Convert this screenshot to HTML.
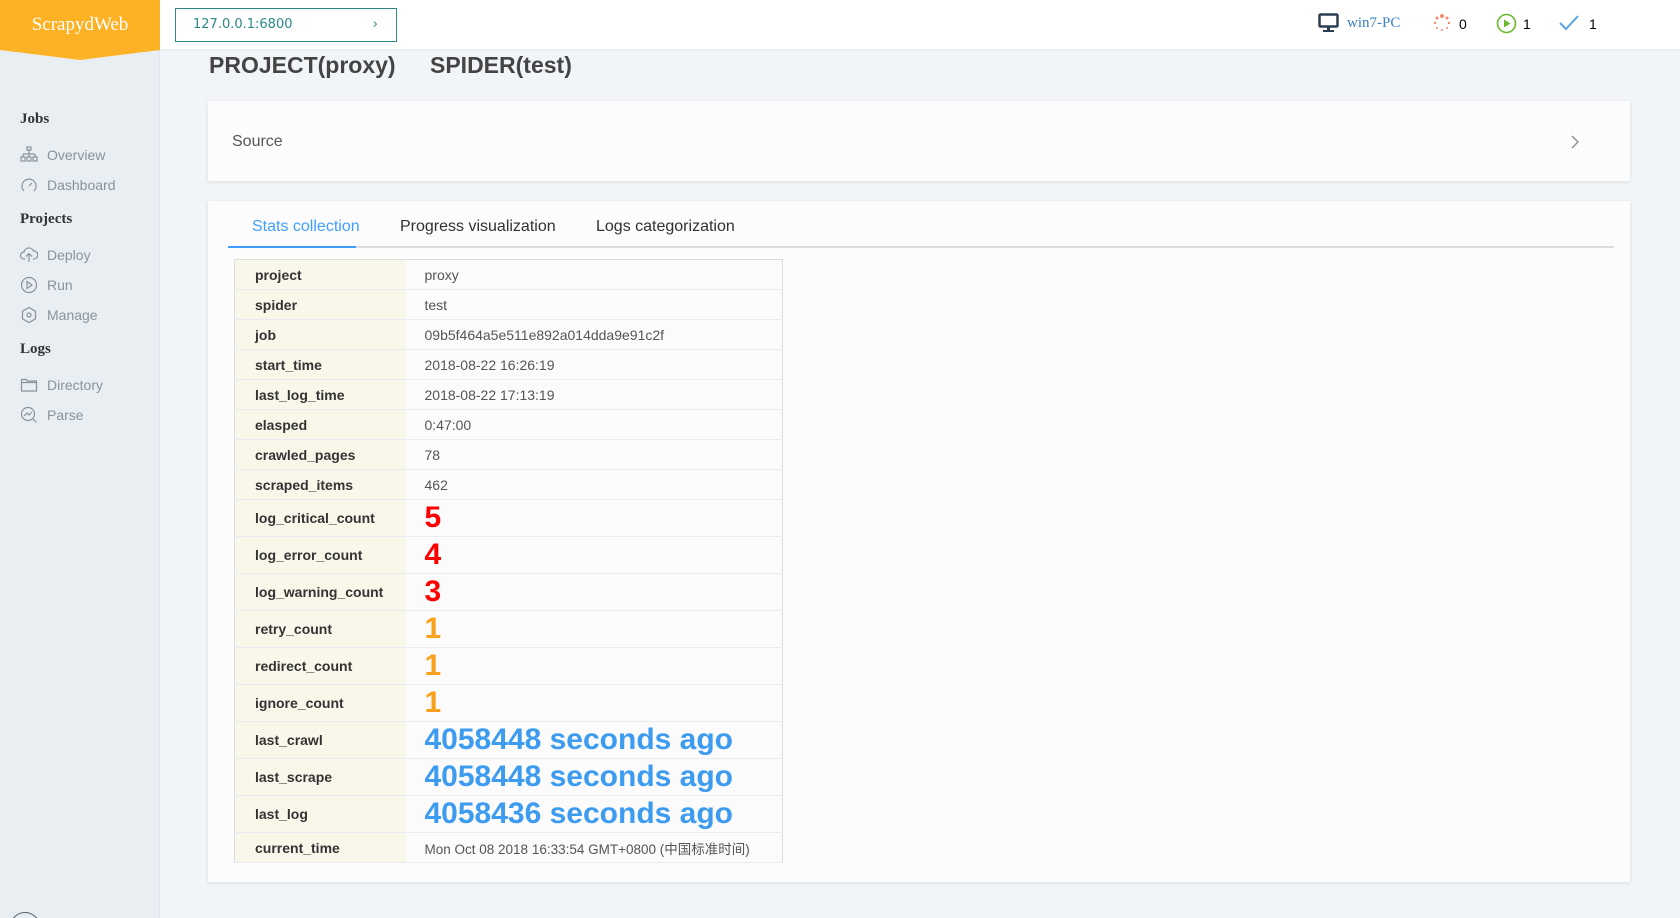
<!DOCTYPE html>
<html style="overflow:hidden;width:1680px;height:918px"><head><meta charset="utf-8"><style>
*{margin:0;padding:0;box-sizing:border-box}
body{width:1680px;height:918px;overflow:hidden;background:#f2f5f8;font-family:"Liberation Sans","Noto Sans CJK SC",sans-serif;position:relative}
.abs{position:absolute}
#side{left:0;top:0;width:160px;height:918px;background:#e9eef3;border-right:1px solid #dfe5ea}
#top{left:0;top:0;width:1680px;height:49px;background:#fff;box-shadow:0 1px 3px rgba(0,0,0,.06)}
#logo{left:0;top:0;width:160px;height:60px;background:#fdb226;clip-path:polygon(0 0,100% 0,100% 50px,50% 60px,0 50px);color:#fff;font-family:"Liberation Serif",serif;font-size:19px;text-align:center;line-height:50px}
.sec{font-family:"Liberation Serif",serif;font-weight:bold;font-size:15px;color:#333;left:20px}
.it{left:20px;font-size:14px;color:#8a939b;display:flex;align-items:center;gap:9px;height:20px}
.it svg{width:18px;height:18px}
.card{background:#fcfcfc;box-shadow:0 1px 4px rgba(0,0,0,.1)}
table{border-collapse:collapse;border:1px solid #dcdcdc;width:549px;font-size:14px}
td{border-bottom:1px solid #e6ecf2;height:30px;padding:0}
td.k{width:171px;background:#f9f7ea;font-weight:bold;color:#333;padding-left:20px}
td.v{color:#555;padding-left:19px;background:#fbfbfb}
tr.b td{height:37px}
td.r{color:#f00;font-weight:bold;font-size:30px}
td.o{color:#f9a11b;font-weight:bold;font-size:30px}
td.bl{color:#3d9bf0;font-weight:bold;font-size:30px}
</style></head><body>
<div id="side" class="abs"></div>
<div id="top" class="abs"></div>
<div id="logo" class="abs">ScrapydWeb</div>
<div class="abs" style="left:175px;top:8px;width:222px;height:34px;border:1px solid #2f8a86;color:#2a8a88;line-height:32px;padding-left:17px;font-family:'DejaVu Sans',sans-serif;font-size:13px">127.0.0.1:6800<span style="position:absolute;right:18px;color:#2a8a88">›</span></div>

<svg class="abs" style="left:1318px;top:13px" width="21" height="20" viewBox="0 0 21 20"><rect x="1.5" y="1.5" width="18" height="12" rx="1" fill="none" stroke="#2c3e50" stroke-width="2.5"/><rect x="9" y="14" width="3" height="3" fill="#2c3e50"/><rect x="5" y="17" width="11" height="2" fill="#2c3e50"/></svg>
<div class="abs" style="left:1347px;top:15px;font-family:'Liberation Serif',serif;font-size:15px;color:#3b82c4">win7-PC</div>
<svg class="abs" style="left:1433px;top:14px" width="18" height="18" viewBox="0 0 18 18" fill="#f08b6a"><circle cx="9" cy="2" r="2"/><circle cx="14" cy="4" r="1.5"/><circle cx="16" cy="9" r="1.2"/><circle cx="14" cy="14" r="1"/><circle cx="9" cy="16" r="1"/><circle cx="4" cy="14" r="1"/><circle cx="2" cy="9" r="1.2"/><circle cx="4" cy="4" r="1.5"/></svg>
<div class="abs" style="left:1459px;top:16px;font-size:14px;color:#000">0</div>
<svg class="abs" style="left:1496px;top:13px" width="21" height="21" viewBox="0 0 21 21"><circle cx="10.5" cy="10.5" r="9" fill="none" stroke="#6bba2f" stroke-width="1.6"/><path d="M8 6.5v8l6.5-4z" fill="#6bba2f"/></svg>
<div class="abs" style="left:1523px;top:16px;font-size:14px;color:#000">1</div>
<svg class="abs" style="left:1559px;top:15px" width="20" height="16" viewBox="0 0 20 16"><path d="M1 8l6 6L19 1" fill="none" stroke="#5ba4e5" stroke-width="2"/></svg>
<div class="abs" style="left:1589px;top:16px;font-size:14px;color:#000">1</div>

<div class="abs sec" style="top:111px">Jobs</div>
<div class="abs it" style="top:145px"><svg viewBox="0 0 18 18" fill="none" stroke="#8a939b" stroke-width="1.2"><rect x="7" y="1" width="4" height="3"/><path d="M9 4v4M3 8h12M3 8v3M9 8v3M15 8v3"/><rect x="1" y="11" width="4" height="4"/><rect x="7" y="11" width="4" height="4"/><rect x="13" y="11" width="4" height="4"/></svg>Overview</div>
<div class="abs it" style="top:175px"><svg viewBox="0 0 18 18" fill="none" stroke="#8a939b" stroke-width="1.2"><path d="M4 15A7 7 0 1 1 14 15"/><path d="M9 10l3-3"/></svg>Dashboard</div>
<div class="abs sec" style="top:211px">Projects</div>
<div class="abs it" style="top:245px"><svg viewBox="0 0 18 18" fill="none" stroke="#8a939b" stroke-width="1.2"><path d="M5 13H4a3.5 3.5 0 0 1 0-7 5 5 0 0 1 9.5-1A4 4 0 0 1 14 13h-1M9 16V8M6 10.5L9 7.5l3 3"/></svg>Deploy</div>
<div class="abs it" style="top:275px"><svg viewBox="0 0 18 18" fill="none" stroke="#8a939b" stroke-width="1.2"><circle cx="9" cy="9" r="7.5"/><path d="M7 5.5v7l5-3.5z"/></svg>Run</div>
<div class="abs it" style="top:305px"><svg viewBox="0 0 18 18" fill="none" stroke="#8a939b" stroke-width="1.2"><path d="M9 1.5l6.5 3.75v7.5L9 16.5l-6.5-3.75v-7.5z"/><circle cx="9" cy="9" r="2"/></svg>Manage</div>
<div class="abs sec" style="top:341px">Logs</div>
<div class="abs it" style="top:375px"><svg viewBox="0 0 18 18" fill="none" stroke="#8a939b" stroke-width="1.2"><path d="M1.5 3.5h5l1 1.5h9v10h-15z M1.5 6.5h15"/></svg>Directory</div>
<div class="abs it" style="top:405px"><svg viewBox="0 0 18 18" fill="none" stroke="#8a939b" stroke-width="1.2"><circle cx="8" cy="8" r="6.5"/><path d="M4 10l3-3 2 2 3-3M13 13l3.5 3.5"/></svg>Parse</div>
<div class="abs" style="left:0;top:905px;width:60px;height:13px;overflow:hidden"><div style="position:absolute;left:10px;top:7px;width:30px;height:30px;border:1.5px solid #55606a;border-radius:50%"></div></div>

<div class="abs" style="left:209px;top:52px;font-size:23px;font-weight:bold;color:#444">PROJECT(proxy)</div>
<div class="abs" style="left:430px;top:52px;font-size:23px;font-weight:bold;color:#444">SPIDER(test)</div>

<div class="abs card" style="left:208px;top:101px;width:1422px;height:80px">
<div class="abs" style="left:24px;top:32px;font-size:16px;color:#555">Source</div>
<svg class="abs" style="left:1362px;top:34px" width="10" height="14" viewBox="0 0 10 14"><path d="M2 1l6 6-6 6" fill="none" stroke="#888" stroke-width="1.3"/></svg>
</div>

<div class="abs card" style="left:208px;top:201px;width:1422px;height:681px">
<div class="abs" style="left:20px;top:45px;width:1386px;height:2px;background:#dcdcdc"></div>
<div class="abs" style="left:20px;top:45px;width:128px;height:2px;background:#409eff"></div>
<div class="abs" style="left:44px;top:17px;font-size:16px;color:#409eff">Stats collection</div>
<div class="abs" style="left:192px;top:17px;font-size:16px;color:#303133">Progress visualization</div>
<div class="abs" style="left:388px;top:17px;font-size:16px;color:#303133">Logs categorization</div>
<table class="abs" style="left:26px;top:58px">
<tr><td class="k">project</td><td class="v">proxy</td></tr>
<tr><td class="k">spider</td><td class="v">test</td></tr>
<tr><td class="k">job</td><td class="v">09b5f464a5e511e892a014dda9e91c2f</td></tr>
<tr><td class="k">start_time</td><td class="v">2018-08-22 16:26:19</td></tr>
<tr><td class="k">last_log_time</td><td class="v">2018-08-22 17:13:19</td></tr>
<tr><td class="k">elasped</td><td class="v">0:47:00</td></tr>
<tr><td class="k">crawled_pages</td><td class="v">78</td></tr>
<tr><td class="k">scraped_items</td><td class="v">462</td></tr>
<tr class="b"><td class="k">log_critical_count</td><td class="v r">5</td></tr>
<tr class="b"><td class="k">log_error_count</td><td class="v r">4</td></tr>
<tr class="b"><td class="k">log_warning_count</td><td class="v r">3</td></tr>
<tr class="b"><td class="k">retry_count</td><td class="v o">1</td></tr>
<tr class="b"><td class="k">redirect_count</td><td class="v o">1</td></tr>
<tr class="b"><td class="k">ignore_count</td><td class="v o">1</td></tr>
<tr class="b"><td class="k">last_crawl</td><td class="v bl">4058448 seconds ago</td></tr>
<tr class="b"><td class="k">last_scrape</td><td class="v bl">4058448 seconds ago</td></tr>
<tr class="b"><td class="k">last_log</td><td class="v bl">4058436 seconds ago</td></tr>
<tr><td class="k">current_time</td><td class="v" style="font-size:13.5px">Mon Oct 08 2018 16:33:54 GMT+0800 (中国标准时间)</td></tr>
</table>
</div>
</body></html>
